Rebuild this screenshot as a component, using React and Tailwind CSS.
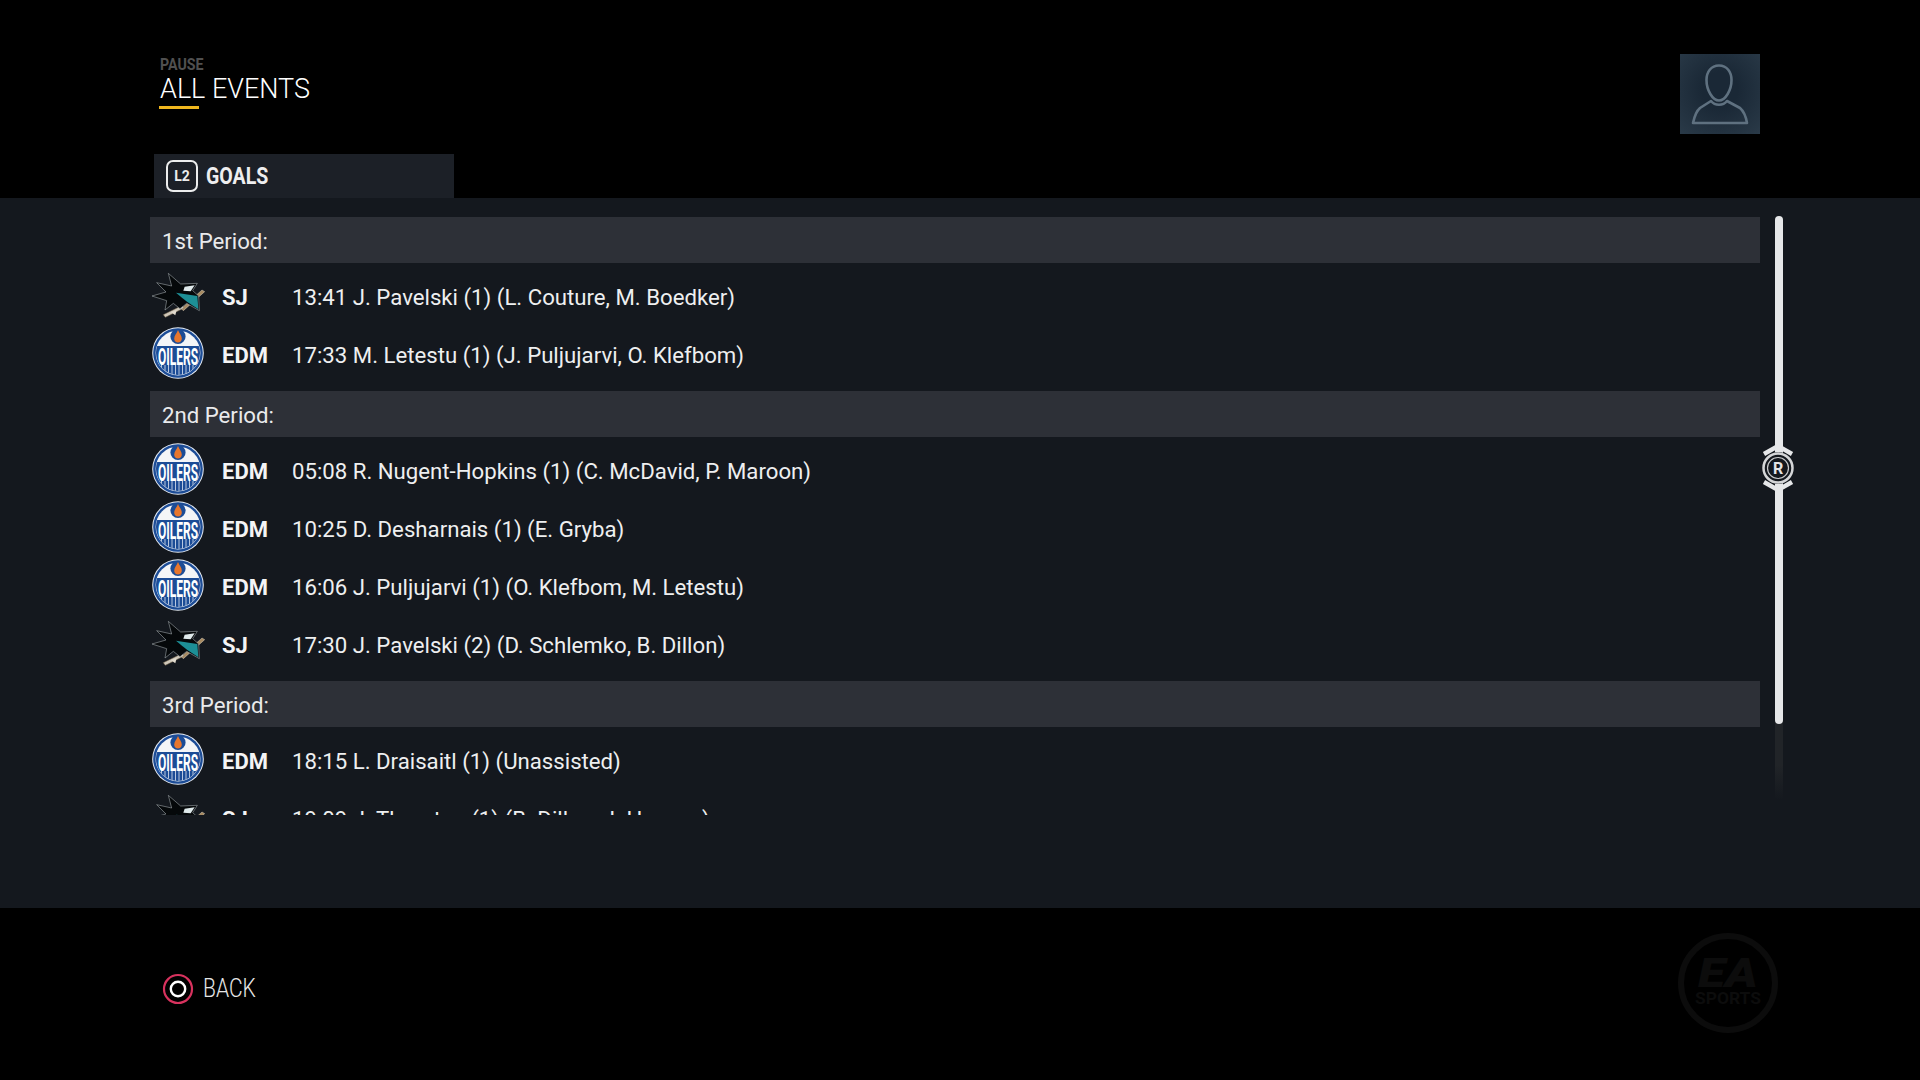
import React, { useId } from "react";

const periods = [
  {
    label: "1st Period:",
    rows: [
      ["SJ", "13:41 J. Pavelski (1) (L. Couture, M. Boedker)"],
      ["EDM", "17:33 M. Letestu (1) (J. Puljujarvi, O. Klefbom)"],
    ],
  },
  {
    label: "2nd Period:",
    rows: [
      ["EDM", "05:08 R. Nugent-Hopkins (1) (C. McDavid, P. Maroon)"],
      ["EDM", "10:25 D. Desharnais (1) (E. Gryba)"],
      ["EDM", "16:06 J. Puljujarvi (1) (O. Klefbom, M. Letestu)"],
      ["SJ", "17:30 J. Pavelski (2) (D. Schlemko, B. Dillon)"],
    ],
  },
  {
    label: "3rd Period:",
    rows: [
      ["EDM", "18:15 L. Draisaitl (1) (Unassisted)"],
      ["SJ", "19:09 J. Thornton (1) (B. Dillon, J. Hansen)"],
    ],
  },
];

function Oilers() {
  const id = useId();
  return (
    <svg width="60" height="58" viewBox="0 0 60 58" className="block shrink-0">
      <defs>
        <clipPath id={id}>
          <circle cx="28" cy="27" r="22" />
        </clipPath>
      </defs>
      <circle cx="28" cy="27" r="25.8" fill="#e8edf4" />
      <circle cx="28" cy="27" r="24.8" fill="#1c4c96" />
      <circle cx="28" cy="27" r="22.4" fill="#f4f5f7" />
      <g clipPath={`url(#${id})`}>
        <rect x="4" y="20" width="48" height="32" fill="#1c4c96" />
        {[11, 14.5, 18, 21.5, 25, 28.5, 32, 35.5, 39, 42.5].map((x) => (
          <rect key={x} x={x} y="39" width="1" height="12" fill="#b8c8e0" />
        ))}
      </g>
      <circle cx="28" cy="10.5" r="7.6" fill="#1c4c96" />
      <path d="M28 4 C29.4 7.5 31.8 9.6 31.8 12.8 C31.8 15.2 30.1 16.6 28 16.6 C25.9 16.6 24.2 15.2 24.2 12.8 C24.2 9.6 26.6 7.5 28 4 Z" fill="#e8762c" />
      <text transform="translate(28 38.5) scale(0.5 1)" textAnchor="middle" fill="#ffffff" fontFamily="Roboto, sans-serif" fontWeight="700" fontSize="24">OILERS</text>
    </svg>
  );
}

function Shark() {
  return (
    <svg width="60" height="58" viewBox="30 24 180 174" className="block shrink-0">
      <path d="M186 90 L194 95 L130 152 L124 146 Z" fill="#a88b62" stroke="#d8cfbe" strokeWidth="1.5" />
      <path d="M70 164 L128 136 L132 144 L76 172 Z" fill="#cfc8ba" stroke="#7d6a4e" strokeWidth="1.5" />
      <path d="M85 40 L122 72 L172 70 L158 92 L176 108 L178 152 L140 130 L120 146 L100 130 L75 150 L80 122 L36 108 L78 96 L50 68 L95 78 Z" fill="#05080a" stroke="#aeb6ba" strokeWidth="1.6" strokeLinejoin="miter" />
      <path d="M108 98 L172 108 L175 148 L142 126 L124 112 Z" fill="#1d8f96" />
      <path d="M134 80 L164 76 L152 94 L130 92 Z" fill="#dfe9eb" />
      <path d="M92 156 L110 150 L106 166 Z" fill="#e0dacd" />
    </svg>
  );
}

function Period({ label, rows }) {
  return (
    <section className="mb-[7px]">
      <div className="h-[46px] bg-[#2d3037] flex items-center pl-3 pt-[3px] text-[22.2px] text-[#e9eaec] font-normal">{label}</div>
      <div className="mt-[5px]">
        {rows.map(([team, text], i) => (
          <div key={i} className="h-[58px] flex items-center">
            {team === "SJ" ? <Shark /> : <Oilers />}
            <span className="ml-3 w-[70px] shrink-0 text-[22px] font-bold text-[#f4f4f5]">{team}</span>
            <span className="pt-[2px] text-[22.2px] text-[#eeeff0] whitespace-nowrap">{text}</span>
          </div>
        ))}
      </div>
    </section>
  );
}

function Handle() {
  return (
    <svg width="40" height="60" viewBox="0 0 40 60" className="absolute left-[-17px] top-[222px]">
      <path d="M6 16 L20 8 L34 16" fill="none" stroke="#e6e7e9" strokeWidth="4.5" />
      <path d="M6 44 L20 52 L34 44" fill="none" stroke="#e6e7e9" strokeWidth="4.5" />
      <circle cx="20" cy="30" r="16" fill="#14181e" />
      <circle cx="20" cy="30" r="14.5" fill="none" stroke="#d5d6d8" strokeWidth="2.5" />
      <circle cx="20" cy="30" r="10.5" fill="none" stroke="#c9cacc" strokeWidth="1.2" />
      <text x="20" y="36" textAnchor="middle" fontFamily="Roboto, sans-serif" fontWeight="700" fontSize="16" fill="#e4e5e7">R</text>
    </svg>
  );
}

export default function App() {
  return (
    <div className="w-[1920px] h-[1080px] bg-black flex flex-col overflow-hidden font-['Roboto',sans-serif]">
      <header className="h-[198px] shrink-0 flex flex-col">
        <div className="h-[154px] flex justify-between pl-[160px] pr-[160px]">
          <div className="pt-[55px]">
            <div className="text-[16.5px] leading-[20px] font-bold text-[#505050] h-[17px] scale-x-[0.86] origin-left">PAUSE</div>
            <div className="text-[27px] leading-[34px] font-light text-white">ALL EVENTS</div>
            <div className="w-[40px] h-[3px] -ml-px bg-[#f0b71e]" />
          </div>
          <div className="mt-[54px] w-[80px] h-[80px] bg-[radial-gradient(circle_at_50%_45%,#1a2836_30%,#2a3a48_100%)]">
            <svg width="80" height="80" viewBox="0 0 80 80" fill="none" stroke="#5f7180" strokeWidth="2.6">
              <path d="M39 11.5 C47 11.5 51.5 18 51.5 26 C51.5 36 45.5 46.5 39 46.5 C32.5 46.5 26.5 36 26.5 26 C26.5 18 31 11.5 39 11.5 Z" />
              <path d="M31 47 C35 52 43 52 47 47 L60 54 C63.5 57 66 63 67 69 H13 C14.5 62 16.5 57 20 54 Z" strokeLinejoin="round" />
            </svg>
          </div>
        </div>
        <div className="ml-[154px] w-[300px] h-[44px] bg-[#1c2027] flex items-center pl-3">
          <div className="w-[32px] h-[32px] border-2 border-[#eceded] rounded-[7px] flex items-center justify-center text-[14px] font-bold text-[#eceded]">L2</div>
          <span className="ml-2 pt-[2px] text-[23px] font-bold text-[#eeeeef] scale-x-[0.85] origin-left">GOALS</span>
        </div>
      </header>

      <main className="h-[710px] shrink-0 bg-[#14181e] pt-[19px] pl-[150px] flex items-start">
        <div className="w-[1610px] h-[598px] overflow-hidden shrink-0">
          {periods.map((p) => (
            <Period key={p.label} {...p} />
          ))}
        </div>
        <div className="ml-[15px] -mt-px w-[8px] h-[584px] relative rounded-full bg-[linear-gradient(#212428_94%,#14181e)]">
          <div className="w-[8px] h-[508px] bg-[#e6e7e9] rounded-full" />
          <Handle />
        </div>
      </main>

      <footer className="h-[172px] shrink-0 flex justify-between pl-[162px] pr-[142px]">
        <div className="flex items-center h-[161px]">
          <svg width="32" height="32" viewBox="0 0 32 32" fill="none">
            <circle cx="16" cy="16" r="14" stroke="#d8325e" strokeWidth="2.2" />
            <circle cx="16" cy="16" r="7.2" stroke="#ffffff" strokeWidth="2.4" />
          </svg>
          <span className="ml-[9px] text-[25px] font-light text-[#e6e6e6] scale-x-[0.84] origin-left">BACK</span>
        </div>
        <svg width="100" height="100" viewBox="0 0 100 100" className="mt-[25px]" fill="#0c0c0c">
          <circle cx="50" cy="50" r="47" fill="none" stroke="#0c0c0c" strokeWidth="6" />
          <text x="50" y="54" textAnchor="middle" fontFamily="Roboto, sans-serif" fontWeight="900" fontStyle="italic" fontSize="40" textLength="60" lengthAdjust="spacingAndGlyphs">EA</text>
          <text x="50" y="71" textAnchor="middle" fontFamily="Roboto, sans-serif" fontWeight="700" fontSize="16" textLength="66" lengthAdjust="spacingAndGlyphs">SPORTS</text>
        </svg>
      </footer>
    </div>
  );
}
